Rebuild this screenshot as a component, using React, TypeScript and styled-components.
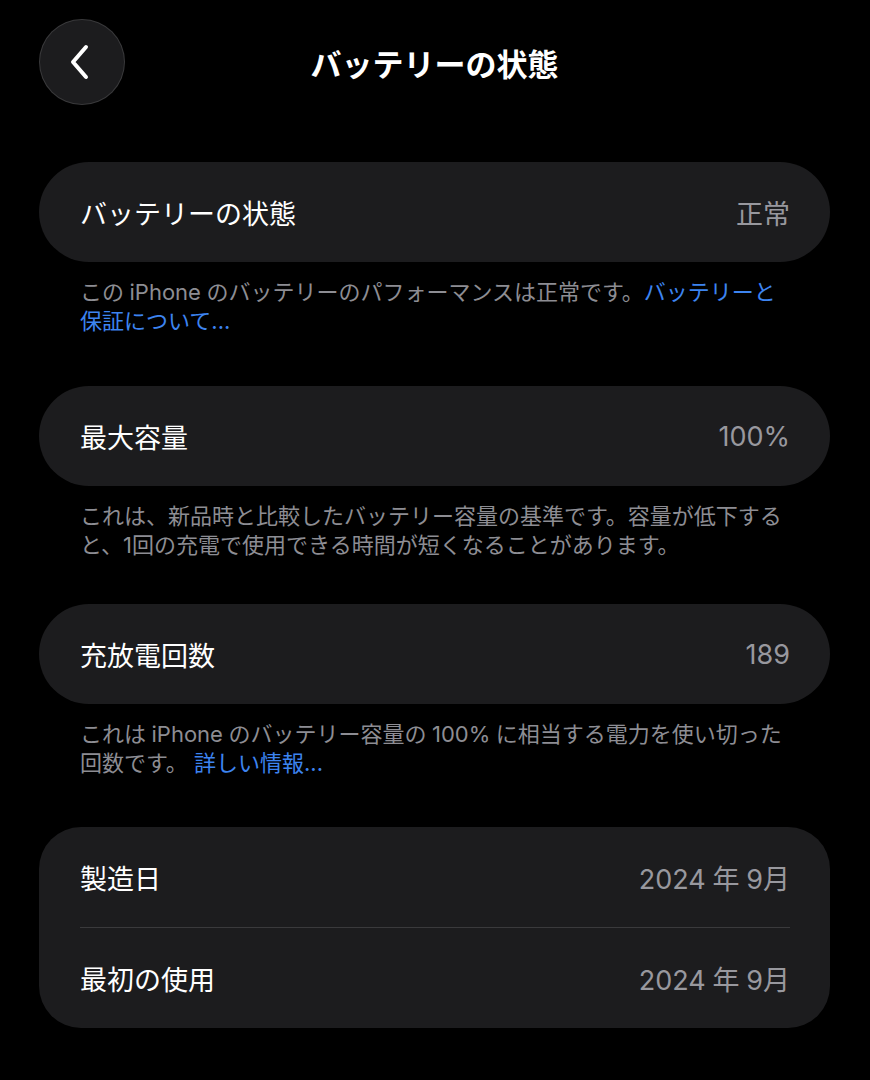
import React from "react";
import styled, { createGlobalStyle } from "styled-components";

const GlobalStyle = createGlobalStyle`
  html, body {
    margin: 0;
    padding: 0;
    background: #000;
  }
  body {
    font-family: Inter, "Noto Sans CJK JP", "Noto Sans", sans-serif;
    -webkit-font-smoothing: antialiased;
  }
`;

const Page = styled.div`
  width: 870px;
  min-height: 1080px;
  box-sizing: border-box;
  background: #000;
  padding: 19px 40px 40px 39px;
  display: flex;
  flex-direction: column;
`;

const Header = styled.header`
  display: grid;
  grid-template-columns: 86px 1fr 86px;
  align-items: center;
  height: 86px;
  margin-bottom: 57px;
`;

const BackButton = styled.button`
  width: 86px;
  height: 86px;
  border-radius: 50%;
  background: #1c1c1e;
  border: 1px solid rgba(255, 255, 255, 0.13);
  box-sizing: border-box;
  display: flex;
  align-items: center;
  justify-content: center;
  padding: 0 4px 0 0;
  cursor: pointer;
`;

const Title = styled.h1`
  margin: 0;
  text-align: center;
  color: #fff;
  font-size: 31px;
  font-weight: 700;
  letter-spacing: 0;
`;

const Card = styled.div<{ $radius?: number }>`
  background: #1c1c1e;
  border-radius: ${(p) => p.$radius ?? 50}px;
  padding: 0 40px 0 41px;
  display: flex;
  flex-direction: column;
`;

const Row = styled.div`
  height: 100px;
  display: flex;
  align-items: center;
  justify-content: space-between;
  font-size: 27px;
`;

const Divider = styled.div`
  height: 1px;
  background: #3a3a3c;
`;

const Label = styled.span`
  color: #fff;
`;

const Value = styled.span`
  color: #98989e;
`;

const Footnote = styled.p`
  margin: 16px 0 0;
  padding: 0 40px 0 41px;
  font-size: 22px;
  line-height: 29px;
  color: #8d8d93;
  white-space: nowrap;
`;

const Link = styled.a`
  color: #3d84f0;
  text-decoration: none;
`;

const Section = styled.section<{ $gap: number }>`
  margin-bottom: ${(p) => p.$gap}px;
`;

const Chevron = () => (
  <svg width="22" height="36" viewBox="0 0 22 36" fill="none">
    <path
      d="M17 3 L4 18 L17 33"
      stroke="#fff"
      strokeWidth="4"
      strokeLinecap="round"
      strokeLinejoin="round"
    />
  </svg>
);

export default function App() {
  return (
    <>
      <GlobalStyle />
      <Page>
        <Header>
          <BackButton aria-label="戻る">
            <Chevron />
          </BackButton>
          <Title>バッテリーの状態</Title>
          <span />
        </Header>

        <Section $gap={50}>
          <Card>
            <Row>
              <Label>バッテリーの状態</Label>
              <Value>正常</Value>
            </Row>
          </Card>
          <Footnote>
            この{"\u2005"}iPhone{"\u2005"}のバッテリーのパフォーマンスは正常です。<Link>バッテリーと</Link>
            <br />
            <Link>保証について...</Link>
          </Footnote>
        </Section>

        <Section $gap={44}>
          <Card>
            <Row>
              <Label>最大容量</Label>
              <Value>100%</Value>
            </Row>
          </Card>
          <Footnote>
            これは、新品時と比較したバッテリー容量の基準です。容量が低下する
            <br />
            と、1回の充電で使用できる時間が短くなることがあります。
          </Footnote>
        </Section>

        <Section $gap={49}>
          <Card>
            <Row>
              <Label>充放電回数</Label>
              <Value>189</Value>
            </Row>
          </Card>
          <Footnote>
            これは{"\u2005"}iPhone{"\u2005"}のバッテリー容量の{"\u2005"}100%{"\u2005"}に相当する電力を使い切った
            <br />
            回数です。 <Link>詳しい情報...</Link>
          </Footnote>
        </Section>

        <Card $radius={42}>
          <Row>
            <Label>製造日</Label>
            <Value>2024{"\u2005"}年{"\u2005"}9月</Value>
          </Row>
          <Divider />
          <Row>
            <Label>最初の使用</Label>
            <Value>2024{"\u2005"}年{"\u2005"}9月</Value>
          </Row>
        </Card>
      </Page>
    </>
  );
}
